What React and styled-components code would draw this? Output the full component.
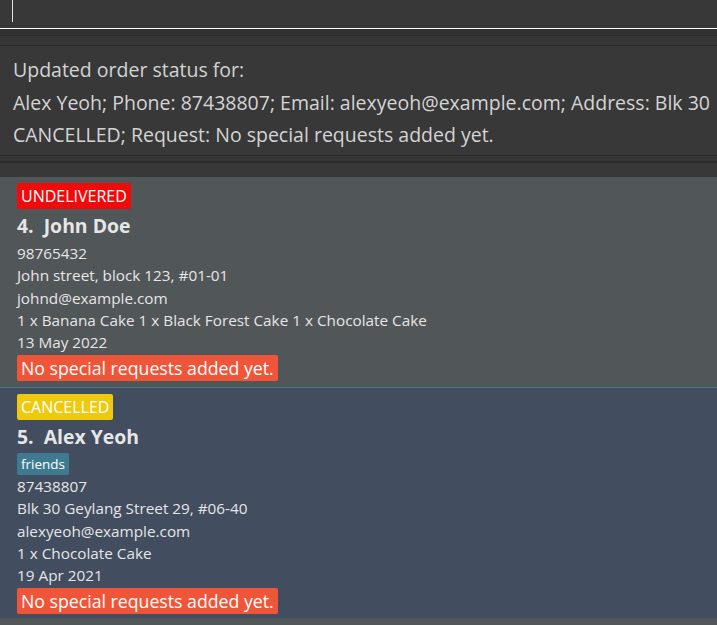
import React from "react"
import styled, { createGlobalStyle } from "styled-components"

const GlobalStyle = createGlobalStyle`
  html, body {
    margin: 0;
    padding: 0;
    background: #383838;
    font-family: "Open Sans", "Noto Sans", sans-serif;
  }
`

const orders = [
  {
    index: 4,
    status: "UNDELIVERED",
    name: "John Doe",
    tags: [],
    phone: "98765432",
    address: "John street, block 123, #01-01",
    email: "johnd@example.com",
    items: "1 x Banana Cake 1 x Black Forest Cake 1 x Chocolate Cake",
    date: "13 May 2022",
    request: "No special requests added yet.",
  },
  {
    index: 5,
    status: "CANCELLED",
    name: "Alex Yeoh",
    tags: ["friends"],
    phone: "87438807",
    address: "Blk 30 Geylang Street 29, #06-40",
    email: "alexyeoh@example.com",
    items: "1 x Chocolate Cake",
    date: "19 Apr 2021",
    request: "No special requests added yet.",
    selected: true,
  },
]

export default function App() {
  return (
    <>
      <GlobalStyle />
      <Window>
        <CommandBox>
          <Caret />
        </CommandBox>
        <Divider />
        <ResultBox>
          <ResultLine>Updated order status for:</ResultLine>
          <ResultLine>
            Alex Yeoh; Phone: 87438807; Email: alexyeoh@example.com; Address: Blk 30
          </ResultLine>
          <ResultLine>CANCELLED; Request: No special requests added yet.</ResultLine>
        </ResultBox>
        <ListDivider />
        <OrderList>
          {orders.map((o) => (
            <Card key={o.index} $selected={o.selected}>
              <Status $status={o.status}>{o.status}</Status>
              <Name>
                {o.index}.&nbsp;&nbsp;{o.name}
              </Name>
              {o.tags.length > 0 && (
                <Tags>
                  {o.tags.map((t) => (
                    <Tag key={t}>{t}</Tag>
                  ))}
                </Tags>
              )}
              <Field>{o.phone}</Field>
              <Field>{o.address}</Field>
              <Field>{o.email}</Field>
              <Field>{o.items}</Field>
              <Field>{o.date}</Field>
              <Request>{o.request}</Request>
            </Card>
          ))}
          <Card />
        </OrderList>
      </Window>
    </>
  )
}

const Window = styled.div`
  width: 717px;
  height: 625px;
  overflow: hidden;
  background: #383838;
  display: flex;
  flex-direction: column;
`

const CommandBox = styled.div`
  height: 28px;
  flex: 0 0 auto;
  background: #383838;
  border-bottom: 1px solid #ffffff;
  padding-left: 12px;
`

const Caret = styled.div`
  width: 1px;
  height: 22px;
  background: #e0e0e0;
`

const Divider = styled.div`
  flex: 0 0 auto;
  height: 16px;
  background: linear-gradient(#323232 0 6px, #2a2a2a 6px 7px, #363636 7px);
`

const ResultBox = styled.div`
  flex: 0 0 auto;
  height: 111px;
  box-sizing: border-box;
  padding: 8px 8px 0 13px;
  background: #383838;
  border-top: 1px solid #2a2a2a;
  border-bottom: 1px solid #2a2a2a;
  color: #d4d4d4;
  font-size: 19.5px;
  line-height: 32.5px;
  overflow: hidden;
`

const ResultLine = styled.div`
  white-space: nowrap;
`

const ListDivider = styled.div`
  flex: 0 0 auto;
  height: 21px;
  background: linear-gradient(#353535 0 5px, #2b2b2b 5px 7px, #383838 7px);
`

const OrderList = styled.div`
  flex: 1 1 auto;
  display: flex;
  flex-direction: column;
`

const Card = styled.div`
  flex: 0 0 auto;
  box-sizing: border-box;
  padding: 6px 17px 4px;
  min-height: 210px;
  background: ${(p) => (p.$selected ? "#424d5f" : "#515658")};
  border-top: ${(p) => (p.$selected ? "1px solid #3e7b91" : "none")};
  display: flex;
  flex-direction: column;
  align-items: flex-start;
`

const statusColors = {
  UNDELIVERED: "#f00a0a",
  CANCELLED: "#eec90d",
  DELIVERED: "#3ea34a",
}

const Status = styled.span`
  background: ${(p) => statusColors[p.$status]};
  color: #ffffff;
  font-size: 16px;
  line-height: 26px;
  padding: 0 4px;
  border-radius: 2px;
`

const Name = styled.div`
  margin-top: 1px;
  color: #e6e6e6;
  font-size: 19.4px;
  font-weight: 700;
  line-height: 32px;
`

const Tags = styled.div`
  display: flex;
  gap: 4px;
`

const Tag = styled.span`
  background: #3e7b91;
  color: #ffffff;
  font-size: 13.5px;
  line-height: 22px;
  padding: 0 4px;
  border-radius: 2px;
`

const Field = styled.div`
  color: #e6e6e6;
  font-size: 15.3px;
  line-height: 22.25px;
  white-space: nowrap;
`

const Request = styled.span`
  margin-top: 2px;
  background: #ef5639;
  color: #ffffff;
  font-size: 17.7px;
  line-height: 26px;
  padding: 0 4px;
  border-radius: 2px;
`
